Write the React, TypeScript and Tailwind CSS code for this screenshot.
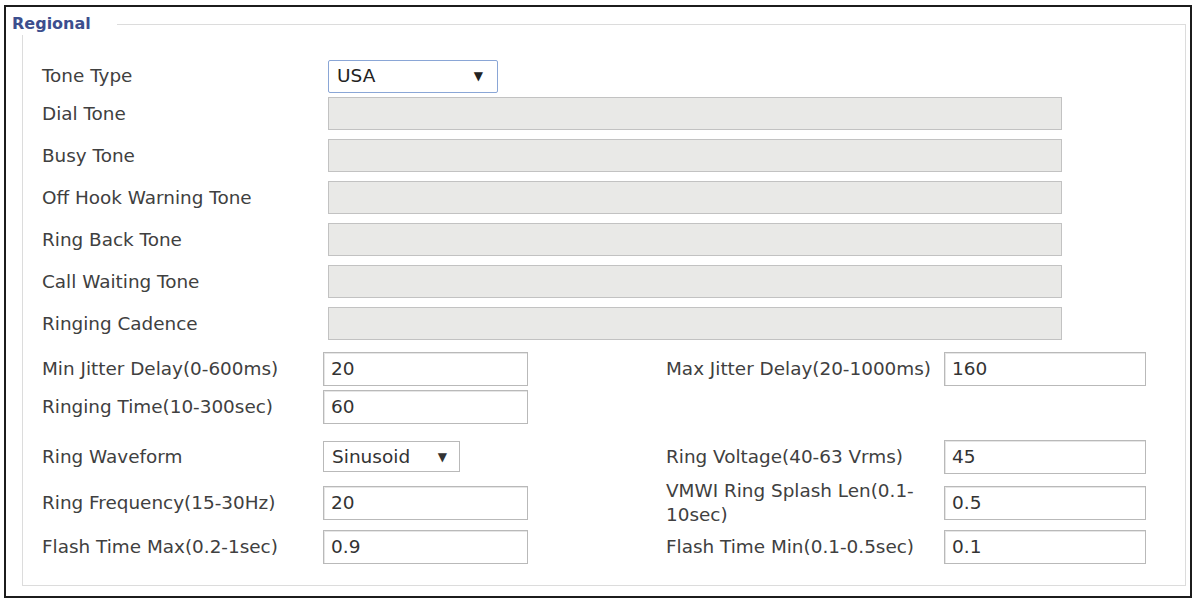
import React from "react";

const font = { fontFamily: '"DejaVu Sans", Verdana, sans-serif' };

function Label({ children, className = "" }: { children: React.ReactNode; className?: string }) {
  return <div className={`text-[18.4px] leading-[22px] text-[#404040] ${className}`}>{children}</div>;
}

function TextBox({ value, w }: { value: string; w: string }) {
  return (
    <div className={`${w} h-[34px] border border-[#b9b9b9] bg-white flex items-center pl-[7px] text-[18.5px] text-[#333] shadow-[inset_1px_1px_0_#e6e6e6]`}>
      {value}
    </div>
  );
}

function Disabled() {
  return <div className="w-[734px] h-[33px] border border-[#c2c2c2] bg-[#e9e9e7]" />;
}

export default function App() {
  const grayRows = [
    "Dial Tone",
    "Busy Tone",
    "Off Hook Warning Tone",
    "Ring Back Tone",
    "Call Waiting Tone",
    "Ringing Cadence",
  ];
  return (
    <div className="w-[1193px] h-[600px] bg-white pl-[4px] pt-[5px]" style={font}>
      <div className="w-[1188px] h-[593px] border-2 border-[#1c1c1c] pl-[16px] pt-[17px] pr-[4px] pb-[10px]">
        <div className="relative h-full border border-[#dcdcdc] pl-[19px] pt-[34px]">
          <div className="absolute left-[-11px] top-[-12px] bg-white pr-[26px] text-[16px] font-bold leading-[22px] text-[#3c4f8e]">
            Regional
          </div>
          <div className="flex flex-col">
            <div className="flex items-center h-[34px]">
              <Label className="w-[286px]">Tone Type</Label>
              <div className="w-[170px] h-[33px] border border-[#8aa6d6] rounded-[2px] flex items-center justify-between pl-[8px] pr-[14px] text-[18.5px] text-[#222]">
                <span>USA</span>
                <span className="text-[12px]">▼</span>
              </div>
            </div>
            {grayRows.map((r, i) => (
              <div key={r} className={`flex items-center h-[33px] ${i === 0 ? "mt-[4px]" : "mt-[9px]"}`}>
                <Label className="w-[286px]">{r}</Label>
                <Disabled />
              </div>
            ))}
          </div>
          <div className="flex flex-col mt-[11px]">
            <div className="flex items-center h-[35px]">
              <Label className="w-[281px]">Min Jitter Delay(0-600ms)</Label>
              <TextBox value="20" w="w-[205px]" />
              <Label className="w-[278px] ml-[138px]">Max Jitter Delay(20-1000ms)</Label>
              <TextBox value="160" w="w-[202px]" />
            </div>
            <div className="flex items-center h-[34px] mt-[4px]">
              <Label className="w-[281px]">Ringing Time(10-300sec)</Label>
              <TextBox value="60" w="w-[205px]" />
            </div>
            <div className="flex items-center h-[35px] mt-[15px]">
              <Label className="w-[281px]">Ring Waveform</Label>
              <div className="w-[137px] h-[31px] border border-[#b9b9b9] flex items-center justify-between pl-[8px] pr-[12px] text-[18.5px] text-[#333]">
                <span>Sinusoid</span>
                <span className="text-[12px]">▼</span>
              </div>
              <Label className="w-[278px] ml-[206px]">Ring Voltage(40-63 Vrms)</Label>
              <TextBox value="45" w="w-[202px]" />
            </div>
            <div className="flex items-center h-[35px] mt-[11px]">
              <Label className="w-[281px]">Ring Frequency(15-30Hz)</Label>
              <TextBox value="20" w="w-[205px]" />
              <Label className="w-[278px] ml-[138px] leading-[24px]">
                VMWI Ring Splash Len(0.1-
                <br />
                10sec)
              </Label>
              <TextBox value="0.5" w="w-[202px]" />
            </div>
            <div className="flex items-center h-[35px] mt-[9px]">
              <Label className="w-[281px]">Flash Time Max(0.2-1sec)</Label>
              <TextBox value="0.9" w="w-[205px]" />
              <Label className="w-[278px] ml-[138px]">Flash Time Min(0.1-0.5sec)</Label>
              <TextBox value="0.1" w="w-[202px]" />
            </div>
          </div>
        </div>
      </div>
    </div>
  );
}
